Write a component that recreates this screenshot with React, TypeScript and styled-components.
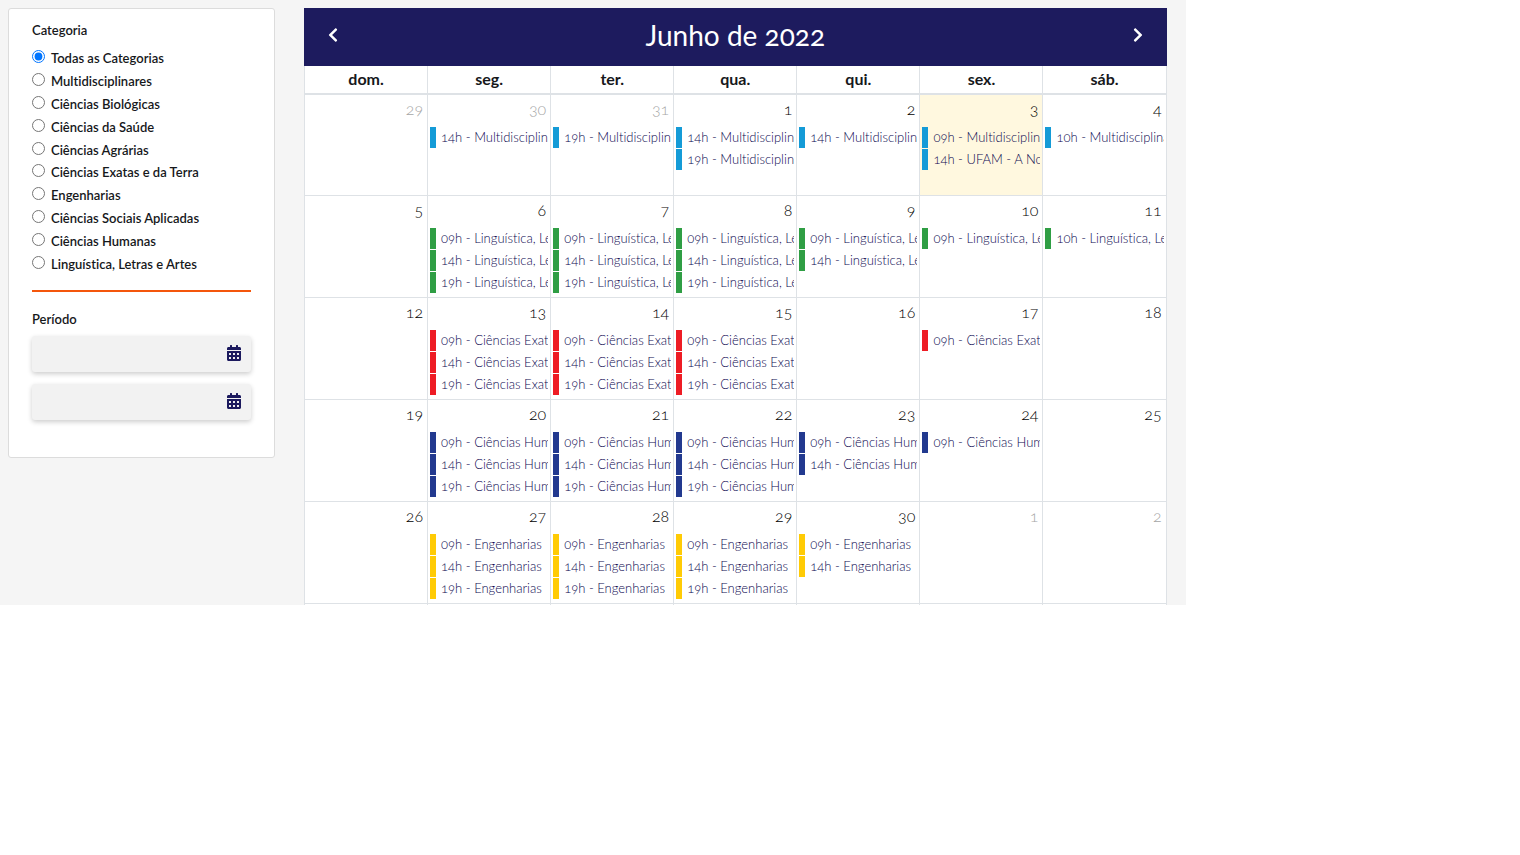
import React, { useState } from "react";
import styled, { createGlobalStyle } from "styled-components";
import { FaCalendarAlt, FaChevronLeft, FaChevronRight } from "react-icons/fa";

const GlobalStyle = createGlobalStyle`
  *, *::before, *::after { box-sizing: border-box; }
  body {
    margin: 0;
    background: #fff;
    color: #16181b;
    font-family: Lato, "Open Sans", sans-serif;
    font-size: 16px;
    font-variant-ligatures: no-common-ligatures;
    font-variant-numeric: oldstyle-nums;
  }
`;

const Page = styled.main`
  display: flex;
  align-items: flex-start;
  gap: 29px;
  width: 78%;
  padding: 8px 19px 0 8px;
  background: #f5f5f5;
`;

const Sidebar = styled.form`
  flex: 0 0 267px;
  min-width: 0;
  padding: 13px 23px 37px;
  background: #fff;
  border: 1px solid #dcdcdc;
  border-radius: 3px;
`;

const Group = styled.fieldset`
  min-width: 0;
  margin: 0;
  padding: 0;
  border: 0;
`;

const GroupTitle = styled.legend`
  display: block;
  padding: 0;
  font-size: 13px;
  font-weight: 600;
  line-height: 16px;
`;

const Options = styled.div`
  display: flex;
  flex-direction: column;
  height: 228px;
  margin-top: 9px;
`;

const Option = styled.label`
  flex: 1;
  display: flex;
  align-items: center;
  gap: 6px;
  font-size: 13px;
  font-weight: 600;
`;

const Radio = styled.input`
  width: 13px;
  height: 13px;
  margin: 0 0 3px;
`;

const Divider = styled.hr`
  height: 2px;
  margin: 15px 0 19px;
  border: 0;
  background: #f4560c;
`;

const DateField = styled.div`
  display: flex;
  align-items: center;
  height: 36px;
  margin-top: 9px;
  padding-right: 9px;
  background: #f2f2f2;
  border-radius: 3px;
  box-shadow: 0 2px 5px rgba(0, 0, 0, 0.2);

  & + & { margin-top: 12px; }
`;

const DateInput = styled.input`
  flex: 1;
  min-width: 0;
  height: 100%;
  padding: 0 10px;
  border: 0;
  background: transparent;
  font: inherit;
`;

const IconButton = styled.button`
  display: flex;
  padding: 0;
  border: 0;
  background: none;
  color: inherit;
  font-size: 16px;
  cursor: pointer;
`;

const DateButton = styled(IconButton)`
  padding-bottom: 2px;
  color: #1c1a5e;
`;

const Calendar = styled.section`
  flex: 1;
  min-width: 0;
`;

const Toolbar = styled.header`
  display: flex;
  align-items: center;
  justify-content: space-between;
  height: 58px;
  padding: 0 21px 4px;
  background: #1d1b5e;
  color: #fff;
`;

const Title = styled.h2`
  margin: 0;
  font-size: 28px;
  font-weight: 400;
  line-height: 34px;
`;

const Month = styled.table`
  width: 100%;
  table-layout: fixed;
  border-collapse: collapse;
  background: #fff;
  border-left: 1px solid #dee2e6;
  border-right: 1px solid #dee2e6;
`;

const Weekday = styled.th`
  height: 28px;
  padding: 0 0 2px;
  border: 1px solid #dee2e6;
  border-top: 0;
  border-bottom: 2px solid #dee2e6;
  font-size: 16px;
  font-weight: 700;
`;

const Day = styled.td<{ $today?: boolean }>`
  height: 102px;
  padding: 4px 2px 0;
  border: 1px solid #dee2e6;
  background: ${(p) => (p.$today ? "#fff8df" : "transparent")};
  vertical-align: top;

  tr:first-child > & { height: 101px; }
`;

const DayNumber = styled.div<{ $muted: boolean }>`
  padding-right: 2px;
  color: ${(p) => (p.$muted ? "#a6a6a6" : "#000")};
  font-weight: 300;
  line-height: 20px;
  text-align: right;
`;

const Events = styled.div`
  margin-top: 8px;
`;

const EventLink = styled.a<{ $color: string }>`
  display: block;
  height: 21px;
  margin-bottom: 1px;
  padding-left: 5px;
  border-left: 6px solid ${(p) => p.$color};
  overflow: hidden;
  color: #0b0850;
  font-size: 13px;
  font-weight: 300;
  line-height: 21px;
  text-decoration: none;
  white-space: nowrap;
`;

const NextWeek = styled.td`
  height: 2px;
  padding: 0;
  border: 1px solid #dee2e6;
  border-bottom: 0;
`;

const categories = [
  "Todas as Categorias",
  "Multidisciplinares",
  "Ciências Biológicas",
  "Ciências da Saúde",
  "Ciências Agrárias",
  "Ciências Exatas e da Terra",
  "Engenharias",
  "Ciências Sociais Aplicadas",
  "Ciências Humanas",
  "Linguística, Letras e Artes",
];

const weekdays = ["dom.", "seg.", "ter.", "qua.", "qui.", "sex.", "sáb."];

interface Week {
  days: number[];
  color: string;
  topic: string;
  hours: string[][];
}

const weeks: Week[] = [
  { days: [29, 30, 31, 1, 2, 3, 4], color: "#149bd7", topic: "Multidisciplinares", hours: [[], ["14h"], ["19h"], ["14h", "19h"], ["14h"], ["09h", "14h"], ["10h"]] },
  { days: [5, 6, 7, 8, 9, 10, 11], color: "#2f9e44", topic: "Linguística, Letras e Artes", hours: [[], ["09h", "14h", "19h"], ["09h", "14h", "19h"], ["09h", "14h", "19h"], ["09h", "14h"], ["09h"], ["10h"]] },
  { days: [12, 13, 14, 15, 16, 17, 18], color: "#ee1c24", topic: "Ciências Exatas e da Terra", hours: [[], ["09h", "14h", "19h"], ["09h", "14h", "19h"], ["09h", "14h", "19h"], [], ["09h"], []] },
  { days: [19, 20, 21, 22, 23, 24, 25], color: "#22398f", topic: "Ciências Humanas", hours: [[], ["09h", "14h", "19h"], ["09h", "14h", "19h"], ["09h", "14h", "19h"], ["09h", "14h"], ["09h"], []] },
  { days: [26, 27, 28, 29, 30, 1, 2], color: "#ffcb05", topic: "Engenharias", hours: [[], ["09h", "14h", "19h"], ["09h", "14h", "19h"], ["09h", "14h", "19h"], ["09h", "14h"], [], []] },
];

const isOutside = (week: number, day: number) =>
  (week === 0 && day > 20) || (week === weeks.length - 1 && day < 10);

const topicOf = (week: Week, day: number, hour: string) =>
  week.topic === "Multidisciplinares" && day === 3 && hour === "14h" ? "UFAM - A Nova" : week.topic;

export default function App() {
  const [category, setCategory] = useState(categories[0]);

  return (
    <>
      <GlobalStyle />
      <Page>
        <Sidebar>
          <Group>
            <GroupTitle>Categoria</GroupTitle>
            <Options>
              {categories.map((name) => (
                <Option key={name}>
                  <Radio type="radio" name="category" checked={category === name} onChange={() => setCategory(name)} />
                  {name}
                </Option>
              ))}
            </Options>
          </Group>
          <Divider />
          <Group>
            <GroupTitle>Período</GroupTitle>
            {["Data inicial", "Data final"].map((label) => (
              <DateField key={label}>
                <DateInput type="text" aria-label={label} />
                <DateButton type="button" aria-label={`Escolher ${label.toLowerCase()}`}>
                  <FaCalendarAlt />
                </DateButton>
              </DateField>
            ))}
          </Group>
        </Sidebar>
        <Calendar>
          <Toolbar>
            <IconButton type="button" aria-label="Mês anterior"><FaChevronLeft /></IconButton>
            <Title>Junho de 2022</Title>
            <IconButton type="button" aria-label="Próximo mês"><FaChevronRight /></IconButton>
          </Toolbar>
          <Month>
            <thead>
              <tr>
                {weekdays.map((name) => <Weekday key={name} scope="col">{name}</Weekday>)}
              </tr>
            </thead>
            <tbody>
              {weeks.map((week, w) => (
                <tr key={w}>
                  {week.days.map((day, d) => (
                    <Day key={d} $today={w === 0 && day === 3}>
                      <DayNumber $muted={isOutside(w, day)}>{day}</DayNumber>
                      <Events>
                        {week.hours[d].map((hour) => (
                          <EventLink key={hour} href="#" $color={week.color}>
                            {`${hour} - ${topicOf(week, day, hour)}`}
                          </EventLink>
                        ))}
                      </Events>
                    </Day>
                  ))}
                </tr>
              ))}
              <tr>
                {weekdays.map((name) => <NextWeek key={name} />)}
              </tr>
            </tbody>
          </Month>
        </Calendar>
      </Page>
    </>
  );
}
